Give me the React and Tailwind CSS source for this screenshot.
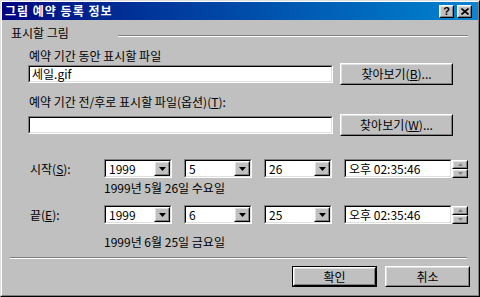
import React from "react";

// classic 3D edges
function Raised({ className = "", children, isDefault = false }) {
  const body = (
    <div className="h-full w-full border border-t-white border-l-white border-r-black border-b-black">
      <div className="h-full w-full flex items-center justify-center bg-[#c0c0c0] border border-t-[#dfdfdf] border-l-[#dfdfdf] border-r-[#808080] border-b-[#808080]">
        {children}
      </div>
    </div>
  );
  if (isDefault) {
    return <div className={"border border-black " + className}>{body}</div>;
  }
  return <div className={className}>{body}</div>;
}

function Sunken({ className = "", children }) {
  return (
    <div className={"border border-t-[#808080] border-l-[#808080] border-r-white border-b-white " + className}>
      <div className="h-full w-full flex items-center bg-white border border-t-black border-l-black border-r-[#dfdfdf] border-b-[#dfdfdf]">
        {children}
      </div>
    </div>
  );
}

function Combo({ value }) {
  return (
    <Sunken className="w-[68px] h-[19px]">
      <span className="flex-1 pl-[3px] leading-[14px]">{value}</span>
      <Raised className="w-[16px] h-[15px]">
        <svg width="7" height="4" viewBox="0 0 7 4">
          <polygon points="0,0 7,0 3.5,4" fill="black" />
        </svg>
      </Raised>
    </Sunken>
  );
}

function TimeField({ value }) {
  return (
    <div className="flex items-center">
      <Sunken className="w-[108px] h-[19px]">
        <span className="pl-[3px] leading-[14px]">{value}</span>
      </Sunken>
      <div className="flex flex-col w-[16px] h-[18px]">
        <Raised className="h-[9px]">
          <svg width="5" height="3" viewBox="0 0 5 3">
            <polygon points="2.5,0 5,3 0,3" fill="#808080" />
          </svg>
        </Raised>
        <Raised className="h-[9px]">
          <svg width="5" height="3" viewBox="0 0 5 3">
            <polygon points="0,0 5,0 2.5,3" fill="#808080" />
          </svg>
        </Raised>
      </div>
    </div>
  );
}

function DateRow({ label, mnemonic, year, month, day, time }) {
  return (
    <div className="h-[19px] flex items-center pl-[28px]">
      <span className="w-[74px] leading-[14px]">
        {label}(<span className="underline">{mnemonic}</span>):
      </span>
      <Combo value={year} />
      <div className="ml-[12px]">
        <Combo value={month} />
      </div>
      <div className="ml-[12px]">
        <Combo value={day} />
      </div>
      <div className="ml-[12px]">
        <TimeField value={time} />
      </div>
    </div>
  );
}

export default function App() {
  return (
    <div className="w-[480px] h-[297px] bg-[#c0c0c0] border border-t-[#dfdfdf] border-l-[#dfdfdf] border-r-black border-b-black font-['Noto_Sans_CJK_KR',sans-serif] text-[12px] leading-[14px] text-black">
      <div className="h-full flex flex-col border border-t-white border-l-white border-r-[#808080] border-b-[#808080]">
        {/* Title bar */}
        <div className="h-[18px] shrink-0 flex items-center bg-linear-to-r from-[#000080] to-[#1084d0] pl-[3px] pr-[6px]">
          <span className="flex-1 text-white font-bold tracking-[1px]">그림 예약 등록 정보</span>
          <div className="flex gap-[3px]">
            <Raised className="w-[15px] h-[13px]">
              <span className="font-bold text-[11px] leading-[11px] font-['Liberation_Sans',sans-serif]">?</span>
            </Raised>
            <Raised className="w-[15px] h-[13px]">
              <svg width="8" height="7" viewBox="0 0 8 7">
                <path d="M0.5 0.5 L7.5 6.5 M7.5 0.5 L0.5 6.5" stroke="black" strokeWidth="1.6" />
              </svg>
            </Raised>
          </div>
        </div>

        {/* Group header */}
        <div className="mt-[6px] h-[14px] flex pl-[9px]">
          <span className="w-[107px]">표시할 그림</span>
          <div className="flex-1 mr-[10px] mt-[9px] h-[2px] border-t border-t-[#808080] border-b border-b-white" />
        </div>

        <div className="mt-[9px] h-[14px] pl-[27px]">예약 기간 동안 표시할 파일</div>
        <div className="h-[22px] flex items-center pl-[26px]">
          <Sunken className="w-[305px] h-[18px]">
            <span className="pl-[2px] leading-[14px]">세일.gif</span>
          </Sunken>
          <Raised className="ml-[7px] w-[113px] h-[22px]">
            <span>
              찾아보기(<span className="underline">B</span>)...
            </span>
          </Raised>
        </div>

        <div className="mt-[10px] h-[14px] pl-[27px]">
          예약 기간 전/후로 표시할 파일(옵션)(<span className="underline">T</span>):
        </div>
        <div className="mt-[5px] h-[22px] flex items-center pl-[26px]">
          <Sunken className="w-[305px] h-[18px]" />
          <Raised className="ml-[7px] w-[113px] h-[22px]">
            <span>
              찾아보기(<span className="underline">W</span>)...
            </span>
          </Raised>
        </div>

        <div className="mt-[23px]">
          <DateRow label="시작" mnemonic="S" year="1999" month="5" day="26" time="오후 02:35:46" />
        </div>
        <div className="mt-[3px] h-[14px] pl-[102px]">1999년 5월 26일 수요일</div>

        <div className="mt-[10px]">
          <DateRow label="끝" mnemonic="E" year="1999" month="6" day="25" time="오후 02:35:46" />
        </div>
        <div className="mt-[11px] h-[14px] pl-[102px]">1999년 6월 25일 금요일</div>

        <div className="mt-[8px] ml-[8px] mr-[11px] h-[2px] border-t border-t-[#808080] border-b border-b-white" />

        <div className="mt-[7px] h-[21px] flex justify-end gap-[8px] pr-[8px]">
          <Raised isDefault className="w-[85px] h-[21px]">
            <span>확인</span>
          </Raised>
          <Raised className="w-[85px] h-[21px]">
            <span>취소</span>
          </Raised>
        </div>
      </div>
    </div>
  );
}
